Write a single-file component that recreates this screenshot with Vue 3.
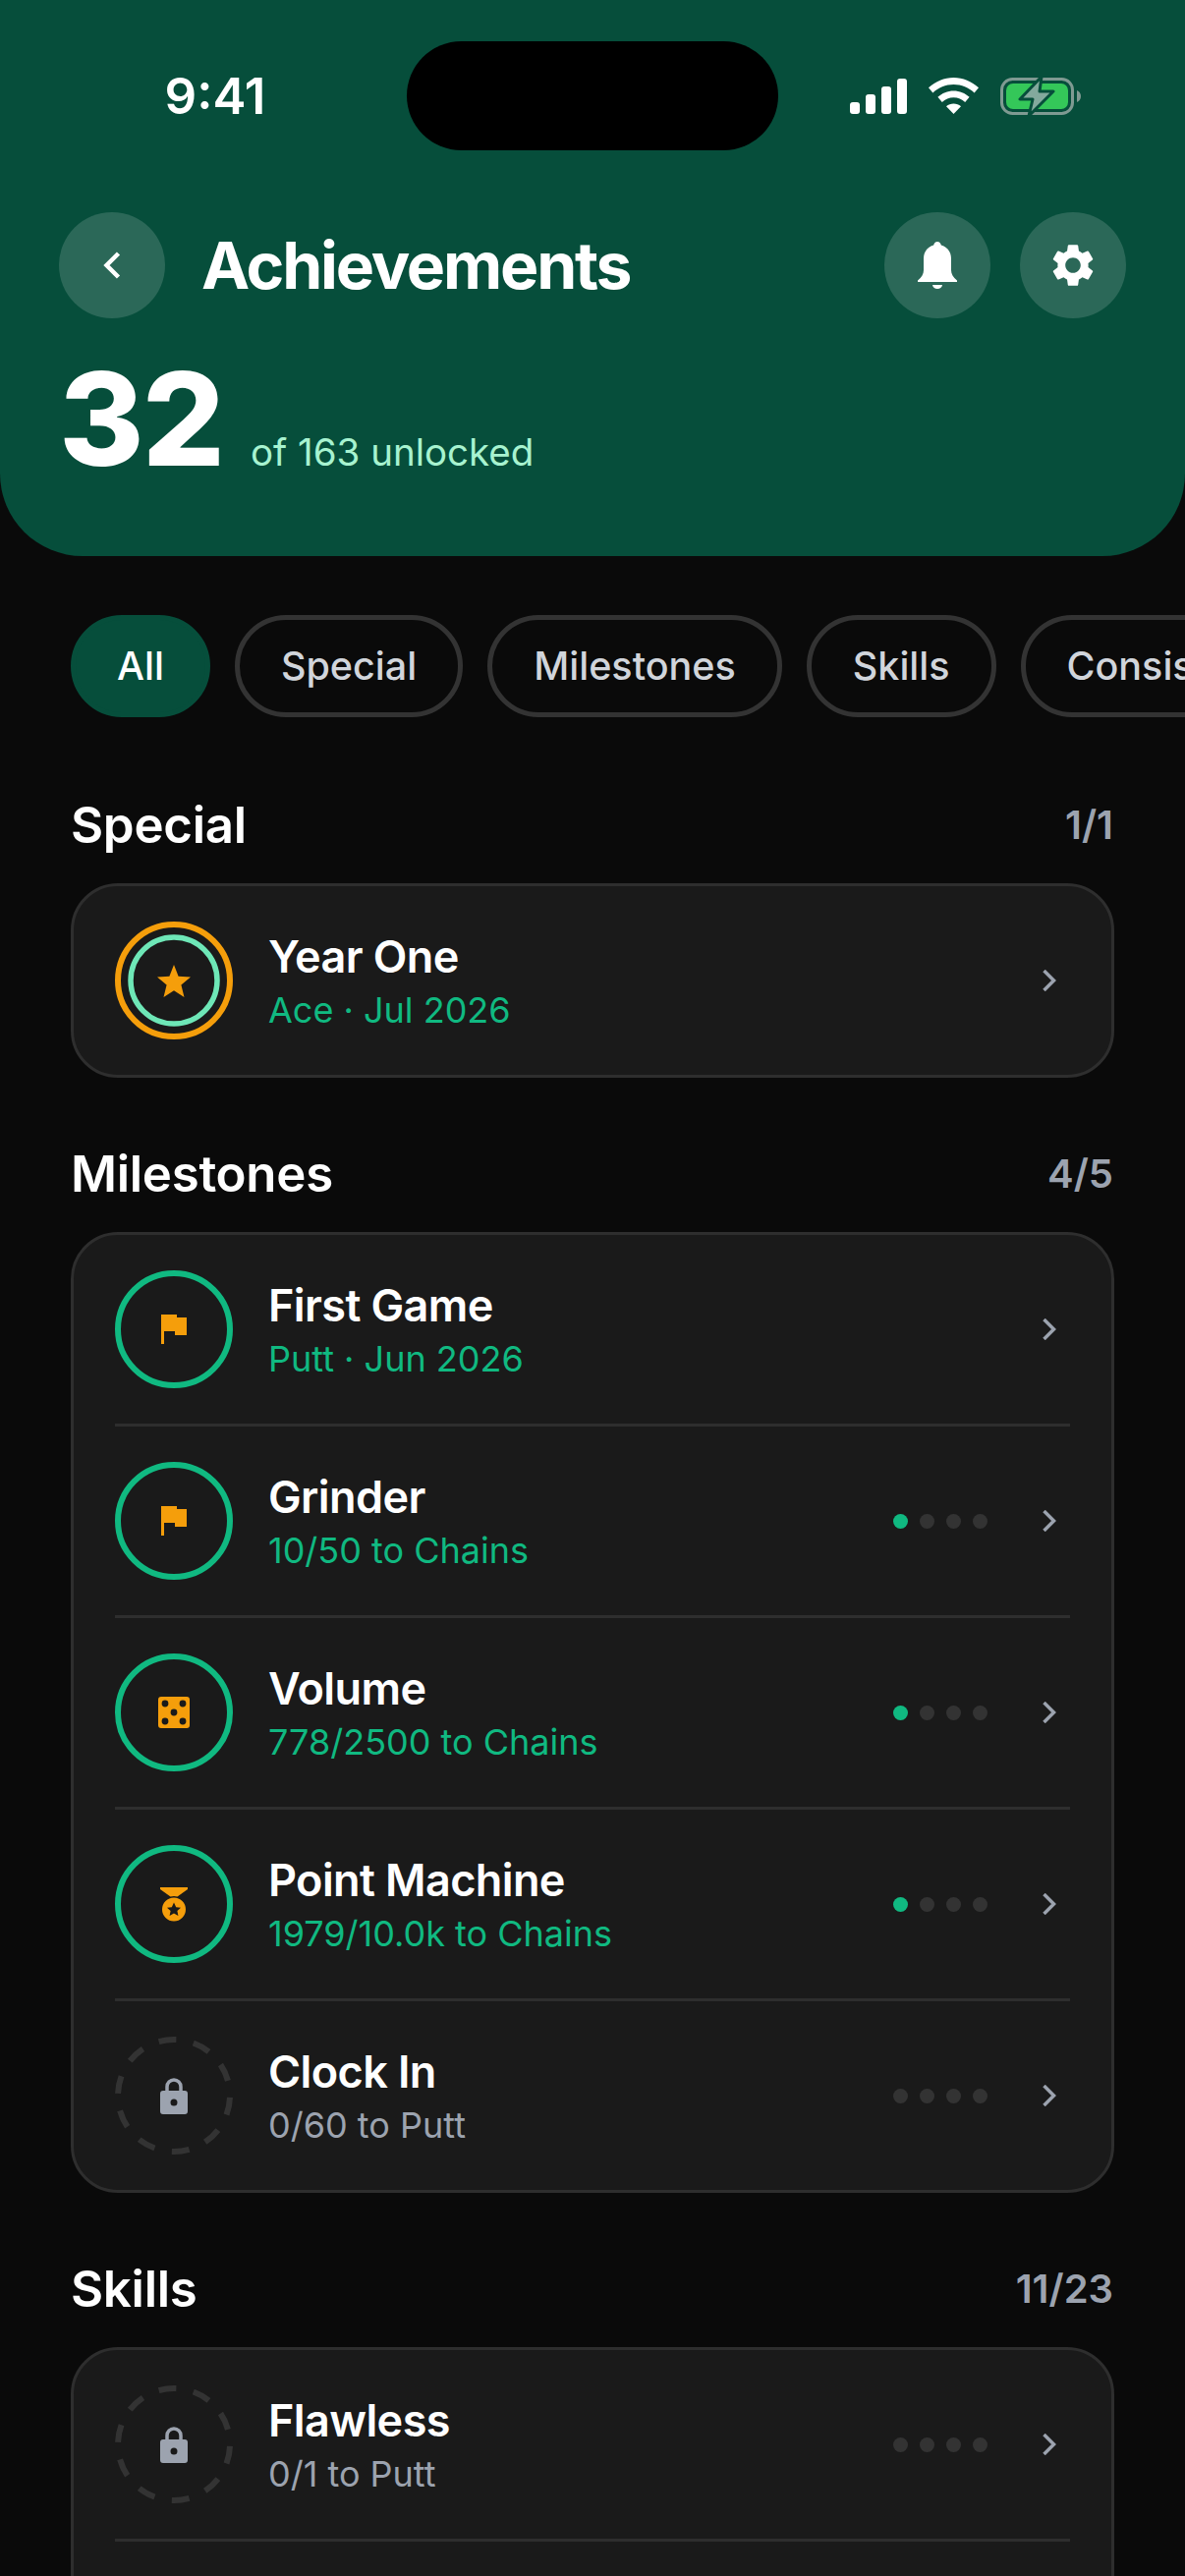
<template>
  <div class="screen">
    <header class="hero">
      <div class="status-bar">
        <div class="status-time">9:41</div>
        <div class="island"></div>
        <div class="status-icons">
          <svg width="58" height="36" viewBox="0 0 58 36" fill="#fff">
            <rect x="0" y="24" width="10" height="12" rx="3" />
            <rect x="16" y="16" width="10" height="20" rx="3" />
            <rect x="32" y="8" width="10" height="28" rx="3" />
            <rect x="48" y="0" width="10" height="36" rx="3" />
          </svg>
          <svg width="51" height="37" viewBox="0 0 51 37" fill="#fff">
            <path d="M25.5 0C35 0 43.8 3.8 51 10.3L46.6 15.4C41 10.2 33.6 7 25.5 7S10 10.2 4.4 15.4L0 10.3C7.2 3.8 16 0 25.5 0Z" />
            <path d="M25.5 13.5C31.6 13.5 37.2 15.9 41.6 19.8L37.2 24.9C34 22 30 20.3 25.5 20.3S17 22 13.8 24.9L9.4 19.8C13.8 15.9 19.4 13.5 25.5 13.5Z" />
            <path d="M25.5 26.5C28.3 26.5 30.9 27.5 33 29.2L25.5 37L18 29.2C20.1 27.5 22.7 26.5 25.5 26.5Z" />
          </svg>
          <svg width="82" height="40" viewBox="0 0 82 40">
            <rect x="1.5" y="2.5" width="72" height="35" rx="11" fill="none" stroke="#7f9a92" stroke-width="3" />
            <rect x="6" y="7" width="63" height="26" rx="7" fill="#34c759" />
            <path d="M78 14C80.5 15 82 17 82 20S80.5 25 78 26Z" fill="#7f9a92" />
            <path d="M42 0L20 23H33L29 40L54 15H40Z" fill="#83a99d" stroke="#064e3b" stroke-width="3" stroke-linejoin="round" />
          </svg>
        </div>
      </div>

      <div class="hero-nav">
        <button class="round-btn">
          <svg width="18" height="28" viewBox="0 0 18 28" fill="none" stroke="#fff" stroke-width="4.5">
            <path d="M15.5 2L3.5 14L15.5 26" />
          </svg>
        </button>
        <h1 class="hero-title">Achievements</h1>
        <button class="round-btn">
          <svg width="42" height="48" viewBox="0 0 42 48" fill="#fff">
            <path d="M21 0C23 0 24.5 1.5 24.8 3.6C31 5.2 35 10.4 35 17V29C35 33 37 36 41 39.5V41H1V39.5C5 36 7 33 7 29V17C7 10.4 11 5.2 17.2 3.6C17.5 1.5 19 0 21 0Z" />
            <path d="M16 44H26C25.6 46.4 23.6 48 21 48S16.4 46.4 16 44Z" />
          </svg>
        </button>
        <button class="round-btn">
          <svg width="52" height="52" viewBox="0 0 24 24" fill="#fff">
            <path d="M19.14 12.94c.04-.3.06-.61.06-.94 0-.32-.02-.64-.07-.94l2.03-1.58c.18-.14.23-.41.12-.61l-1.92-3.32c-.12-.22-.37-.29-.59-.22l-2.39.96c-.5-.38-1.03-.7-1.62-.94l-.36-2.54c-.04-.24-.24-.41-.48-.41h-3.84c-.24 0-.43.17-.47.41l-.36 2.54c-.59.24-1.13.57-1.62.94l-2.39-.96c-.22-.08-.47 0-.59.22L2.74 8.87c-.12.21-.08.47.12.61l2.03 1.58c-.05.3-.09.63-.09.94s.02.64.07.94l-2.03 1.58c-.18.14-.23.41-.12.61l1.92 3.32c.12.22.37.29.59.22l2.39-.96c.5.38 1.03.7 1.62.94l.36 2.54c.05.24.24.41.48.41h3.84c.24 0 .44-.17.47-.41l.36-2.54c.59-.24 1.13-.56 1.62-.94l2.39.96c.22.08.47 0 .59-.22l1.92-3.32c.12-.22.07-.47-.12-.61l-2.01-1.58zM12 15.6c-1.98 0-3.6-1.62-3.6-3.6s1.62-3.6 3.6-3.6 3.6 1.62 3.6 3.6-1.62 3.6-3.6 3.6z" />
          </svg>
        </button>
      </div>

      <div class="hero-count">
        <span class="count-num">32</span>
        <span class="count-label">of 163 unlocked</span>
      </div>
    </header>

    <div class="chips">
      <div
        v-for="(chip, i) in chips"
        :key="chip"
        class="chip"
        :class="{ 'chip-active': i === 0 }"
      >{{ chip }}</div>
    </div>

    <section v-for="section in sections" :key="section.title" class="section">
      <div class="section-head">
        <h2 class="section-title">{{ section.title }}</h2>
        <span class="section-count">{{ section.count }}</span>
      </div>
      <div class="card" :class="{ 'card-more': section.more }">
        <template v-for="(row, i) in section.rows" :key="row.title">
          <div class="row">
            <div class="badge">
              <svg width="120" height="120" viewBox="0 0 120 120" class="badge-ring" fill="none">
                <template v-if="row.icon === 'star'">
                  <circle cx="60" cy="60" r="57" stroke="#f59e0b" stroke-width="6" />
                  <circle cx="60" cy="60" r="44" stroke="#6ee7b7" stroke-width="5.5" />
                </template>
                <circle v-else-if="row.icon !== 'lock'" cx="60" cy="60" r="57" stroke="#10b981" stroke-width="6" />
                <circle v-else cx="60" cy="60" r="57" stroke="#333" stroke-width="6" stroke-dasharray="18 17.8" stroke-dashoffset="-2" />
              </svg>
              <svg v-if="row.icon === 'star'" width="34" height="33" viewBox="0 0 34 33" fill="#f59e0b" class="badge-icon">
                <path d="M17 0L21.6 11.7L34 12.6L24.4 20.6L27.5 33L17 26.2L6.5 33L9.6 20.6L0 12.6L12.4 11.7Z" />
              </svg>
              <svg v-else-if="row.icon === 'flag'" width="26" height="30" viewBox="0 0 26 30" fill="#f59e0b" class="badge-icon">
                <path d="M0 0H16V3H26V21H14V17H3V30H0Z" />
              </svg>
              <svg v-else-if="row.icon === 'dice'" width="32" height="32" viewBox="0 0 32 32" fill="#f59e0b" class="badge-icon">
                <path fill-rule="evenodd" d="M3 0H29A3 3 0 0 1 32 3V29A3 3 0 0 1 29 32H3A3 3 0 0 1 0 29V3A3 3 0 0 1 3 0ZM7 3.6A3.4 3.4 0 1 0 7 10.4A3.4 3.4 0 1 0 7 3.6ZM25 3.6A3.4 3.4 0 1 0 25 10.4A3.4 3.4 0 1 0 25 3.6ZM16 12.6A3.4 3.4 0 1 0 16 19.4A3.4 3.4 0 1 0 16 12.6ZM7 21.6A3.4 3.4 0 1 0 7 28.4A3.4 3.4 0 1 0 7 21.6ZM25 21.6A3.4 3.4 0 1 0 25 28.4A3.4 3.4 0 1 0 25 21.6Z" />
              </svg>
              <svg v-else-if="row.icon === 'medal'" width="28" height="35" viewBox="0 0 28 35" fill="#f59e0b" class="badge-icon">
                <path d="M0 0H28V2L17.5 9.6C16.4 9.2 15.2 9 14 9S11.6 9.2 10.5 9.6L0 2Z" />
                <path fill-rule="evenodd" d="M14 10.5A12 12 0 1 1 14 34.5A12 12 0 1 1 14 10.5ZM14 15.5L11.8 20.2L7 20.7L10.6 24L9.6 29L14 26.4L18.4 29L17.4 24L21 20.7L16.2 20.2Z" />
              </svg>
              <svg v-else width="28" height="37" viewBox="0 0 28 37" class="badge-icon">
                <path d="M7 16V9A7 7 0 0 1 21 9V16" fill="none" stroke="#9ca3af" stroke-width="3.5" />
                <path fill="#9ca3af" fill-rule="evenodd" d="M3 13H25A3 3 0 0 1 28 16V34A3 3 0 0 1 25 37H3A3 3 0 0 1 0 34V16A3 3 0 0 1 3 13ZM14 21.5A3.5 3.5 0 1 0 14 28.5A3.5 3.5 0 1 0 14 21.5Z" />
              </svg>
            </div>
            <div class="row-text">
              <div class="row-title">{{ row.title }}</div>
              <div class="row-sub" :class="{ 'row-sub-locked': row.icon === 'lock' }">{{ row.sub }}</div>
            </div>
            <div v-if="row.dots !== undefined" class="dots">
              <span
                v-for="n in 4"
                :key="n"
                class="dot"
                :class="{ 'dot-on': n <= row.dots }"
              ></span>
            </div>
            <svg width="14" height="22" viewBox="0 0 14 22" fill="none" stroke="#9ca3af" stroke-width="3.5" class="row-chevron">
              <path d="M1.5 1L11.5 11L1.5 21" />
            </svg>
          </div>
          <div v-if="i < section.rows.length - 1 || section.more" class="divider"></div>
        </template>
      </div>
    </section>
  </div>
</template>

<script setup>
const chips = ['All', 'Special', 'Milestones', 'Skills', 'Consistency']

const sections = [
  {
    title: 'Special',
    count: '1/1',
    rows: [{ icon: 'star', title: 'Year One', sub: 'Ace · Jul 2026' }]
  },
  {
    title: 'Milestones',
    count: '4/5',
    rows: [
      { icon: 'flag', title: 'First Game', sub: 'Putt · Jun 2026' },
      { icon: 'flag', title: 'Grinder', sub: '10/50 to Chains', dots: 1 },
      { icon: 'dice', title: 'Volume', sub: '778/2500 to Chains', dots: 1 },
      { icon: 'medal', title: 'Point Machine', sub: '1979/10.0k to Chains', dots: 1 },
      { icon: 'lock', title: 'Clock In', sub: '0/60 to Putt', dots: 0 }
    ]
  },
  {
    title: 'Skills',
    count: '11/23',
    more: true,
    rows: [{ icon: 'lock', title: 'Flawless', sub: '0/1 to Putt', dots: 0 }]
  }
]
</script>

<style>
html,
body {
  margin: 0;
  background: #0a0a0a;
}
</style>

<style scoped>
.screen {
  width: 1206px;
  height: 2622px;
  overflow: hidden;
  background: #0a0a0a;
  color: #fff;
  font-family: Inter, "Liberation Sans", sans-serif;
}

.hero {
  background: #064e3b;
  border-radius: 0 0 84px 84px;
  height: 566px;
  padding-top: 42px;
  box-sizing: border-box;
}

.status-bar {
  display: flex;
  align-items: center;
  height: 111px;
}

.status-time {
  width: 414px;
  padding-left: 24px;
  box-sizing: border-box;
  text-align: center;
  font-size: 51px;
  font-weight: 600;
}

.island {
  width: 378px;
  height: 111px;
  border-radius: 56px;
  background: #000;
}

.status-icons {
  flex: 1;
  display: flex;
  align-items: center;
  gap: 22px;
  padding-left: 73px;
}

.hero-nav {
  display: flex;
  align-items: center;
  margin-top: 63px;
  padding: 0 60px;
  gap: 30px;
}

.round-btn {
  width: 108px;
  height: 108px;
  border: 0;
  padding: 0;
  border-radius: 50%;
  background: rgba(255, 255, 255, 0.15);
  display: flex;
  align-items: center;
  justify-content: center;
  flex-shrink: 0;
}

.hero-title {
  flex: 1;
  margin: 0 0 0 7px;
  font-size: 66px;
  font-weight: 700;
  letter-spacing: -2.2px;
}

.hero-count {
  display: flex;
  align-items: baseline;
  gap: 28px;
  margin-top: 30px;
  padding: 0 60px;
}

.count-num {
  font-size: 132px;
  font-weight: 800;
  line-height: 1.1;
  letter-spacing: -2px;
}

.count-label {
  font-size: 38.5px;
  color: #a7f3d0;
}

.chips {
  display: flex;
  gap: 25px;
  margin-top: 60px;
  padding-left: 72px;
}

.chip {
  flex-shrink: 0;
  height: 104px;
  box-sizing: border-box;
  display: flex;
  align-items: center;
  padding: 0 42px;
  border: 5px solid #333;
  border-radius: 52px;
  font-size: 39.5px;
  font-weight: 500;
  color: #d1d5db;
}

.chip-active {
  background: #064e3b;
  border-color: #064e3b;
  color: #fff;
}

.section {
  margin-top: 67px;
  padding: 0 72px;
}

.chips + .section {
  margin-top: 79px;
}

.section-head {
  display: flex;
  align-items: center;
  justify-content: space-between;
  height: 60px;
  margin-bottom: 30px;
}

.section-title {
  margin: 0;
  font-size: 51px;
  font-weight: 600;
  letter-spacing: -0.3px;
}

.section-count {
  font-size: 40px;
  font-weight: 600;
  color: #9ca3af;
  margin-right: 1px;
}

.card {
  background: #1a1a1a;
  border: 3px solid #2e2e2e;
  border-radius: 48px;
}

.card-more {
  padding-bottom: 120px;
}

.row {
  display: flex;
  align-items: center;
  height: 192px;
  padding: 0 42px;
  gap: 36px;
}

.divider {
  height: 3px;
  margin: 0 42px;
  background: #2e2e2e;
}

.badge {
  position: relative;
  width: 120px;
  height: 120px;
  flex-shrink: 0;
  display: flex;
  align-items: center;
  justify-content: center;
}

.badge-ring {
  position: absolute;
  inset: 0;
}

.badge-icon {
  position: relative;
}

.row-text {
  flex: 1;
  min-width: 0;
  padding-top: 4px;
}

.row-title {
  font-size: 45px;
  font-weight: 600;
  letter-spacing: -0.6px;
  line-height: 56px;
}

.row-sub {
  font-size: 36px;
  line-height: 52px;
  color: #10b981;
}

.row-sub-locked {
  color: #9ca3af;
}

.dots {
  display: flex;
  gap: 12px;
  margin-right: 20px;
}

.dot {
  width: 15px;
  height: 15px;
  border-radius: 50%;
  background: #333;
}

.dot-on {
  background: #10b981;
}

.row-chevron {
  margin-right: 14px;
  flex-shrink: 0;
}
</style>
